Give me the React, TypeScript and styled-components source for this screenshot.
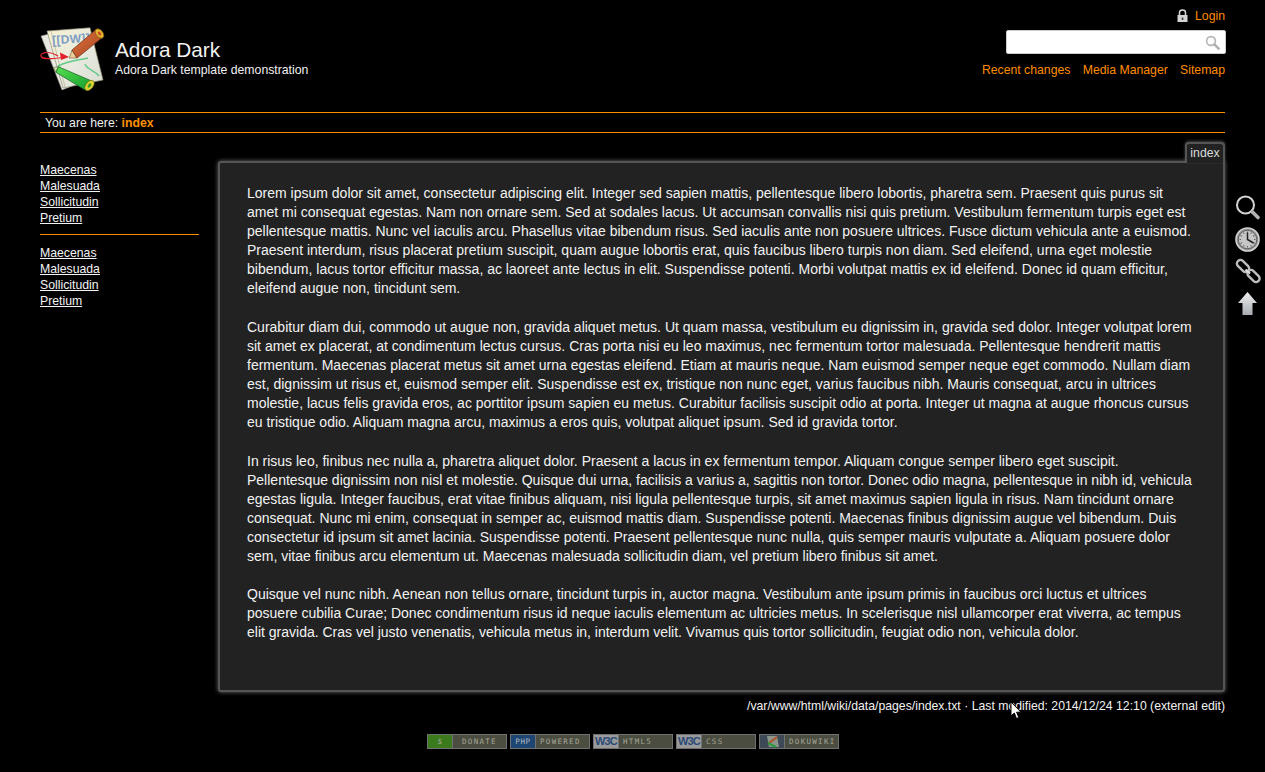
import React from "react";
import styled, { createGlobalStyle } from "styled-components";

const Global = createGlobalStyle`
  html, body { margin: 0; padding: 0; background: #000; }
  body { color: #f0f0f0; font-family: "Liberation Sans", Arial, sans-serif; font-size: 12.25px; }
  * { box-sizing: border-box; }
`;

const Page = styled.div`
  position: relative;
  width: 1265px;
  height: 772px;
  overflow: hidden;
  padding: 0 40px;
`;
const Header = styled.header`
  display: flex;
  justify-content: space-between;
  height: 112px;
`;
const Brand = styled.div`
  display: flex;
  align-items: flex-start;
  gap: 9px;
  padding-top: 27px;
`;
const BrandText = styled.div`
  padding-top: 11px;
`;
const SiteTitle = styled.h1`
  margin: 0;
  font-size: 20.8px;
  font-weight: 400;
  line-height: 24px;
  color: #f2f2f2;
`;
const Tagline = styled.p`
  margin: 1px 0 0;
  font-size: 12.25px;
  line-height: 15px;
`;
const Tools = styled.div`
  display: flex;
  flex-direction: column;
  align-items: flex-end;
  padding-top: 8px;
`;
const LoginRow = styled.a`
  display: flex;
  align-items: center;
  gap: 7px;
  height: 15px;
  color: #ff8c00;
  font-size: 12.25px;
`;
const SearchBox = styled.div`
  display: flex;
  align-items: center;
  justify-content: flex-end;
  width: 220px;
  height: 24px;
  margin: 7px -1px 0 0;
  padding-right: 5px;
  background: #fff;
  border: 1px solid #ccc;
  border-radius: 2px;
`;
const SiteNav = styled.nav`
  display: flex;
  gap: 12.25px;
  margin-top: 9px;
`;
const OrangeLink = styled.a`
  color: #ff8c00;
  font-size: 12.25px;
  line-height: 15px;
`;
const Trail = styled.div`
  height: 21px;
  border-top: 1px solid #ff8c00;
  border-bottom: 1px solid #ff8c00;
  padding-left: 5px;
  font-size: 12.25px;
  line-height: 20px;
`;
const Current = styled.b`
  color: #ff9000;
`;
const Body = styled.div`
  display: flex;
  gap: 19px;
  padding-top: 10px;
`;
const Sidebar = styled.aside`
  width: 159px;
  padding-top: 19px;
`;
const SideList = styled.div`
  display: flex;
  flex-direction: column;
`;
const SideLink = styled.a`
  color: #f4f4f4;
  text-decoration: underline;
  font-size: 12.25px;
  line-height: 16px;
`;
const SideRule = styled.div`
  height: 1px;
  background: #ff8c00;
  margin: 8px 0 10px;
`;
const Main = styled.main`
  width: 1007px;
  display: flex;
  flex-direction: column;
`;
const TabRow = styled.div`
  display: flex;
  justify-content: flex-end;
  height: 19px;
  position: relative;
  z-index: 1;
  margin-top: -1px;
`;
const Tab = styled.div`
  width: 40px;
  height: 21px;
  padding-top: 2px;
  text-align: center;
  font-size: 12.25px;
  line-height: 15px;
  color: #dcdcdc;
  background: #222;
  border: 2px solid #555;
  border-bottom: 0;
  border-radius: 4px 4px 0 0;
  box-shadow: 0 -1px 3px rgba(170, 170, 170, 0.4);
`;
const Panel = styled.div`
  height: 531px;
  padding: 21px 29px 0 27px;
  background: #222;
  border: 2px solid #555;
  border-radius: 3px 0 3px 3px;
  box-shadow: 0 0 4px rgba(200, 200, 200, 0.55);
`;
const Para = styled.p`
  margin: 0 0 19.8px;
  font-size: 14px;
  line-height: 19px;
  color: #f2f2f2;
`;
const DocInfo = styled.div`
  margin-top: 6px;
  text-align: right;
  font-size: 12.25px;
  line-height: 16px;
  color: #f2f2f2;
`;
const Badges = styled.div`
  display: flex;
  gap: 3px;
  position: absolute;
  left: 427px;
  top: 734px;
`;
const Badge = styled.div`
  display: flex;
  align-items: stretch;
  width: 80px;
  height: 15px;
  border: 1px solid #717171;
  background: #4a4d40;
`;
const BadgeSide = styled.div<{ $bg: string; $c?: string }>`
  width: 24px;
  flex: none;
  background: ${(p) => p.$bg};
  color: ${(p) => p.$c || "#a9a99c"};
  display: flex;
  align-items: center;
  justify-content: center;
  font-family: "DejaVu Sans Mono", monospace;
  font-size: 7.5px;
  letter-spacing: 0.6px;
  line-height: 1;
  overflow: hidden;
`;
const BadgeLabel = styled.div<{ $pad: number }>`
  flex: 1;
  display: flex;
  align-items: center;
  padding-left: ${(p) => p.$pad}px;
  font-family: "DejaVu Sans Mono", monospace;
  font-size: 7.5px;
  letter-spacing: 1.3px;
  color: #a6a698;
  white-space: nowrap;
  border-left: 1px solid #717171;
`;
const W3 = styled.span`
  font-family: "Liberation Sans", sans-serif;
  font-size: 11px;
  font-weight: 700;
  letter-spacing: -0.8px;
  color: #2a4a78;
`;
const PageTools = styled.div`
  position: absolute;
  left: 1234px;
  top: 193px;
  display: flex;
  flex-direction: column;
  gap: 4px;
`;
const ToolIcon = styled.svg`
  display: block;
  width: 28px;
  height: 28px;
`;
const Cursor = styled.svg`
  position: absolute;
  left: 1010px;
  top: 701px;
`;

const paras = [
  "Lorem ipsum dolor sit amet, consectetur adipiscing elit. Integer sed sapien mattis, pellentesque libero lobortis, pharetra sem. Praesent quis purus sit amet mi consequat egestas. Nam non ornare sem. Sed at sodales lacus. Ut accumsan convallis nisi quis pretium. Vestibulum fermentum turpis eget est pellentesque mattis. Nunc vel iaculis arcu. Phasellus vitae bibendum risus. Sed iaculis ante non posuere ultrices. Fusce dictum vehicula ante a euismod. Praesent interdum, risus placerat pretium suscipit, quam augue lobortis erat, quis faucibus libero turpis non diam. Sed eleifend, urna eget molestie bibendum, lacus tortor efficitur massa, ac laoreet ante lectus in elit. Suspendisse potenti. Morbi volutpat mattis ex id eleifend. Donec id quam efficitur, eleifend augue non, tincidunt sem.",
  "Curabitur diam dui, commodo ut augue non, gravida aliquet metus. Ut quam massa, vestibulum eu dignissim in, gravida sed dolor. Integer volutpat lorem sit amet ex placerat, at condimentum lectus cursus. Cras porta nisi eu leo maximus, nec fermentum tortor malesuada. Pellentesque hendrerit mattis fermentum. Maecenas placerat metus sit amet urna egestas eleifend. Etiam at mauris neque. Nam euismod semper neque eget commodo. Nullam diam est, dignissim ut risus et, euismod semper elit. Suspendisse est ex, tristique non nunc eget, varius faucibus nibh. Mauris consequat, arcu in ultrices molestie, lacus felis gravida eros, ac porttitor ipsum sapien eu metus. Curabitur facilisis suscipit odio at porta. Integer ut magna at augue rhoncus cursus eu tristique odio. Aliquam magna arcu, maximus a eros quis, volutpat aliquet ipsum. Sed id gravida tortor.",
  "In risus leo, finibus nec nulla a, pharetra aliquet dolor. Praesent a lacus in ex fermentum tempor. Aliquam congue semper libero eget suscipit. Pellentesque dignissim non nisl et molestie. Quisque dui urna, facilisis a varius a, sagittis non tortor. Donec odio magna, pellentesque in nibh id, vehicula egestas ligula. Integer faucibus, erat vitae finibus aliquam, nisi ligula pellentesque turpis, sit amet maximus sapien ligula in risus. Nam tincidunt ornare consequat. Nunc mi enim, consequat in semper ac, euismod mattis diam. Suspendisse potenti. Maecenas finibus dignissim augue vel bibendum. Duis consectetur id ipsum sit amet lacinia. Suspendisse potenti. Praesent pellentesque nunc nulla, quis semper mauris vulputate a. Aliquam posuere dolor sem, vitae finibus arcu elementum ut. Maecenas malesuada sollicitudin diam, vel pretium libero finibus sit amet.",
  "Quisque vel nunc nibh. Aenean non tellus ornare, tincidunt turpis in, auctor magna. Vestibulum ante ipsum primis in faucibus orci luctus et ultrices posuere cubilia Curae; Donec condimentum risus id neque iaculis elementum ac ultricies metus. In scelerisque nisl ullamcorper erat viverra, ac tempus elit gravida. Cras vel justo venenatis, vehicula metus in, interdum velit. Vivamus quis tortor sollicitudin, feugiat odio non, vehicula dolor.",
];
const sideItems = ["Maecenas", "Malesuada", "Sollicitudin", "Pretium"];

const Logo = () => (
  <svg width="66" height="66" viewBox="40 27 66 66" style={{ display: "block", flex: "none" }}>
    <defs>
      <linearGradient id="pg" x1="0" y1="0" x2="1" y2="1">
        <stop offset="0" stopColor="#f6f1d2" />
        <stop offset="0.55" stopColor="#e8eadf" />
        <stop offset="1" stopColor="#d8dccf" />
      </linearGradient>
      <linearGradient id="rp" x1="0" y1="0" x2="1" y2="1">
        <stop offset="0" stopColor="#dd7440" />
        <stop offset="1" stopColor="#a8431e" />
      </linearGradient>
      <linearGradient id="gp" x1="0" y1="0" x2="1" y2="1">
        <stop offset="0" stopColor="#55e050" />
        <stop offset="1" stopColor="#159a2c" />
      </linearGradient>
    </defs>
    <polygon points="41,36 53,33 72,86 62,90" fill="#e9e9e2" stroke="#8b8b80" strokeWidth="0.6" />
    <polygon points="47,31 90,27.8 103,80 63,88" fill="url(#pg)" stroke="#8f8e76" strokeWidth="0.7" />
    <line x1="51" y1="31" x2="65" y2="87" stroke="#a9a68c" strokeWidth="0.6" />
    <text x="52.5" y="44.5" fontFamily="Liberation Sans, sans-serif" fontWeight="700" fontSize="12" letterSpacing="0.3" fill="#7d9cc4" transform="rotate(-4 52 44.5)">[[DW]]</text>
    <path d="M58 56 C48 50 40 53 41 56 C42 60 52 59 66 57" fill="none" stroke="#e0202a" strokeWidth="1.2" />
    <polygon points="60,52.5 69,57 61,60" fill="#e0202a" />
    <path d="M58 66 C70 60 80 60 88 58 M85 64 C87 70 95 70 99 76" fill="none" stroke="#63c98a" strokeWidth="1.4" />
    <polygon points="69.3,58 72,50 77,58" fill="#e8cf9a" stroke="#5a3a20" strokeWidth="0.5" />
    <polygon points="72,50 96,29.5 103,37 77,58" fill="url(#rp)" stroke="#6b2c12" strokeWidth="0.7" />
    <ellipse cx="99.5" cy="33.5" rx="3.4" ry="5.4" transform="rotate(-40 99.5 33.5)" fill="#e3b72e" stroke="#7a4a10" strokeWidth="0.6" />
    <ellipse cx="99.5" cy="33.5" rx="1.4" ry="2.2" transform="rotate(-40 99.5 33.5)" fill="#c64a2a" />
    <polygon points="53.5,67.5 58.3,66.7 56,72.3" fill="#e8dfb0" stroke="#355a2a" strokeWidth="0.5" />
    <polygon points="58.3,66.7 93.3,81.7 85,90 56,72.3" fill="url(#gp)" stroke="#0d5a1c" strokeWidth="0.7" />
    <ellipse cx="89.5" cy="85.5" rx="3.6" ry="6" transform="rotate(40 89.5 85.5)" fill="#dcd232" stroke="#6a6a10" strokeWidth="0.6" />
    <ellipse cx="89.5" cy="85.5" rx="1.4" ry="2.4" transform="rotate(40 89.5 85.5)" fill="#3a9a2a" />
  </svg>
);

const LockIcon = () => (
  <svg width="11" height="13" viewBox="0 0 11 13" style={{ display: "block" }}>
    <path d="M2.5 6V3.6C2.5 1.9 3.8 1 5.5 1s3 .9 3 2.6V6" fill="none" stroke="#d8d8d8" strokeWidth="1.5" />
    <rect x="0.5" y="6" width="10" height="7" fill="#d4d4d4" />
    <rect x="4.8" y="8.5" width="1.5" height="2.5" fill="#333" />
  </svg>
);

const SearchIcon = () => (
  <svg width="15" height="15" viewBox="0 0 15 15" style={{ display: "block" }}>
    <circle cx="6" cy="6" r="4.4" fill="none" stroke="#b4b4b4" strokeWidth="1.6" />
    <line x1="9.4" y1="9.4" x2="13.6" y2="13.6" stroke="#b0b0b0" strokeWidth="2.6" strokeLinecap="round" />
  </svg>
);

const clockTicks = Array.from({ length: 12 }, (_, i) => i * 30);

const App = () => (
  <Page>
    <Global />
    <Header>
      <Brand>
        <Logo />
        <BrandText>
          <SiteTitle>Adora Dark</SiteTitle>
          <Tagline>Adora Dark template demonstration</Tagline>
        </BrandText>
      </Brand>
      <Tools>
        <LoginRow><LockIcon />Login</LoginRow>
        <SearchBox><SearchIcon /></SearchBox>
        <SiteNav>
          <OrangeLink>Recent changes</OrangeLink>
          <OrangeLink>Media Manager</OrangeLink>
          <OrangeLink>Sitemap</OrangeLink>
        </SiteNav>
      </Tools>
    </Header>
    <Trail>You are here: <Current>index</Current></Trail>
    <Body>
      <Sidebar>
        <SideList>{sideItems.map((s) => <SideLink key={s}>{s}</SideLink>)}</SideList>
        <SideRule />
        <SideList>{sideItems.map((s) => <SideLink key={s}>{s}</SideLink>)}</SideList>
      </Sidebar>
      <Main>
        <TabRow><Tab>index</Tab></TabRow>
        <Panel>{paras.map((p, i) => <Para key={i}>{p}</Para>)}</Panel>
        <DocInfo>/var/www/html/wiki/data/pages/index.txt · Last modified: 2014/12/24 12:10 (external edit)</DocInfo>
      </Main>
    </Body>
    <Badges>
      <Badge><BadgeSide $bg="#3c7a1e">$</BadgeSide><BadgeLabel $pad={9}>DONATE</BadgeLabel></Badge>
      <Badge><BadgeSide $bg="#1e4672" $c="#b0b8c0">PHP</BadgeSide><BadgeLabel $pad={4}>POWERED</BadgeLabel></Badge>
      <Badge><BadgeSide $bg="#9a9a9a"><W3>W3C</W3></BadgeSide><BadgeLabel $pad={4}>HTML5</BadgeLabel></Badge>
      <Badge><BadgeSide $bg="#9a9a9a"><W3>W3C</W3></BadgeSide><BadgeLabel $pad={4}>CSS</BadgeLabel></Badge>
      <Badge>
        <BadgeSide $bg="#3d4a55">
          <svg width="20" height="13" viewBox="0 0 20 13">
            <polygon points="5,1 15,1 17,12 7,12" fill="#8d9488" />
            <line x1="7" y1="8" x2="15" y2="2" stroke="#b0502a" strokeWidth="2" />
            <line x1="6" y1="8" x2="14" y2="12" stroke="#2a9a3a" strokeWidth="2" />
          </svg>
        </BadgeSide>
        <BadgeLabel $pad={4}>DOKUWIKI</BadgeLabel>
      </Badge>
    </Badges>
    <PageTools>
      <ToolIcon viewBox="0 0 28 28">
        <circle cx="11.5" cy="12" r="8.5" fill="none" stroke="#d4d4d4" strokeWidth="2" />
        <line x1="18.5" y1="19" x2="24" y2="24.5" stroke="#b4b4b4" strokeWidth="3.6" strokeLinecap="round" />
      </ToolIcon>
      <ToolIcon viewBox="0 0 28 28">
        <circle cx="13.5" cy="14.5" r="11.5" fill="#8f8f8f" stroke="#d4d4d4" strokeWidth="1.6" />
        <circle cx="13.5" cy="14.5" r="9.2" fill="#c6c6c6" stroke="#444" strokeWidth="0.7" />
        {clockTicks.map((a) => (
          <line key={a} x1="13.5" y1="6.5" x2="13.5" y2="8" stroke="#555" strokeWidth="0.9" transform={`rotate(${a} 13.5 14.5)`} />
        ))}
        <path d="M13.5 7.5V14.5L19.5 18" fill="none" stroke="#222" strokeWidth="1.5" />
      </ToolIcon>
      <ToolIcon viewBox="0 0 28 28">
        <g fill="none" stroke="#bdbdbd" strokeWidth="2.4">
          <rect x="2" y="5.5" width="14" height="7" rx="3.2" transform="rotate(45 9 9)" />
          <rect x="12.5" y="15.5" width="14" height="7" rx="3.2" transform="rotate(45 19.5 19)" />
        </g>
        <line x1="11.5" y1="12.5" x2="16" y2="16.5" stroke="#e0e0e0" strokeWidth="2" />
      </ToolIcon>
      <ToolIcon viewBox="0 0 28 28">
        <defs>
          <linearGradient id="up" x1="0" y1="0" x2="0" y2="1">
            <stop offset="0" stopColor="#f0f0f0" />
            <stop offset="1" stopColor="#a8acb2" />
          </linearGradient>
        </defs>
        <polygon points="13.5,3 23,14 18.5,14 18.5,26 8.5,26 8.5,14 4,14" fill="url(#up)" />
      </ToolIcon>
    </PageTools>
    <Cursor width="12" height="19" viewBox="0 0 12 19">
      <path d="M1 1V15L4.3 12L6.5 17.5L8.8 16.5L6.6 11.2H11Z" fill="#fff" stroke="#000" strokeWidth="1" />
    </Cursor>
  </Page>
);

export default App;
